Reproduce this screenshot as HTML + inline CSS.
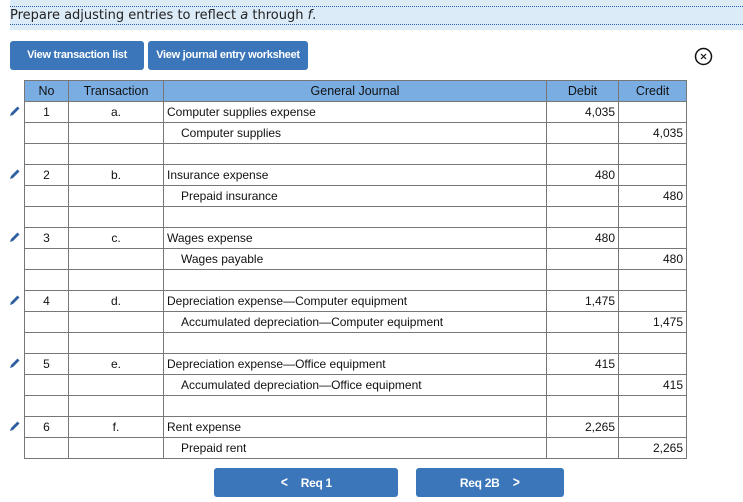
<!DOCTYPE html>
<html><head><meta charset="utf-8"><style>
body{margin:0;width:743px;height:502px;background:#fff;font-family:"Liberation Sans",Arial,sans-serif;position:relative;overflow:hidden}
.hdr{position:absolute;left:10px;top:0;width:733px;height:30px;background:#dcebf8}
.hdr .t{position:absolute;left:0;top:6px;width:733px;height:17px;border-top:1px dotted #2a5fb0;border-bottom:1px dotted #2a5fb0;line-height:17px;color:#222;font-family:"DejaVu Sans",sans-serif;font-size:13px}
.btn{position:absolute;background:#3a76b9;color:#fff;font-weight:bold;font-size:11px;border-radius:3px;text-align:center;letter-spacing:-0.3px}
table{position:absolute;left:24px;top:80px;border-collapse:collapse;font-size:12px;color:#111}
td,th{border:1px solid #777;height:21px;padding:0 3px;box-sizing:border-box}
th{background:#7aaee3;font-weight:normal;font-size:12.5px}
td.c{text-align:center}td.r{text-align:right}
.ind{padding-left:17px}
.pen{position:absolute;left:9px;width:12px;height:12px}
.ch{font-size:15px;display:inline-block;transform:scaleX(0.8)}
</style></head><body>
<div class="hdr"><div class="t">Prepare adjusting entries to reflect <i>a</i> through <i>f</i>.</div></div>
<div class="btn" style="left:10px;top:41px;width:134px;height:29px;line-height:29px">View transaction list</div>
<div class="btn" style="left:148px;top:41px;width:160px;height:29px;line-height:29px">View journal entry worksheet</div>
<svg style="position:absolute;left:694px;top:47px" width="19" height="19" viewBox="0 0 19 19"><circle cx="9.5" cy="9.5" r="8" fill="none" stroke="#111" stroke-width="1.5"/><path d="M7 7L12 12M12 7L7 12" stroke="#111" stroke-width="1.2"/></svg>
<table>
<colgroup><col style="width:44px"><col style="width:95px"><col style="width:383px"><col style="width:72px"><col style="width:68px"></colgroup>
<tr><th>No</th><th>Transaction</th><th>General Journal</th><th>Debit</th><th>Credit</th></tr>
<tr><td class="c">1</td><td class="c">a.</td><td>Computer supplies expense</td><td class="r">4,035</td><td></td></tr>
<tr><td></td><td></td><td class="ind">Computer supplies</td><td></td><td class="r">4,035</td></tr>
<tr><td></td><td></td><td></td><td></td><td></td></tr>
<tr><td class="c">2</td><td class="c">b.</td><td>Insurance expense</td><td class="r">480</td><td></td></tr>
<tr><td></td><td></td><td class="ind">Prepaid insurance</td><td></td><td class="r">480</td></tr>
<tr><td></td><td></td><td></td><td></td><td></td></tr>
<tr><td class="c">3</td><td class="c">c.</td><td>Wages expense</td><td class="r">480</td><td></td></tr>
<tr><td></td><td></td><td class="ind">Wages payable</td><td></td><td class="r">480</td></tr>
<tr><td></td><td></td><td></td><td></td><td></td></tr>
<tr><td class="c">4</td><td class="c">d.</td><td>Depreciation expense—Computer equipment</td><td class="r">1,475</td><td></td></tr>
<tr><td></td><td></td><td class="ind">Accumulated depreciation—Computer equipment</td><td></td><td class="r">1,475</td></tr>
<tr><td></td><td></td><td></td><td></td><td></td></tr>
<tr><td class="c">5</td><td class="c">e.</td><td>Depreciation expense—Office equipment</td><td class="r">415</td><td></td></tr>
<tr><td></td><td></td><td class="ind">Accumulated depreciation—Office equipment</td><td></td><td class="r">415</td></tr>
<tr><td></td><td></td><td></td><td></td><td></td></tr>
<tr><td class="c">6</td><td class="c">f.</td><td>Rent expense</td><td class="r">2,265</td><td></td></tr>
<tr><td></td><td></td><td class="ind">Prepaid rent</td><td></td><td class="r">2,265</td></tr>
</table>
<svg class="pen" style="top:105px" viewBox="0 0 12 12"><path d="M1 11L2 8L8.5 1.5L10.5 3.5L4 10Z" fill="#2f5f9f"/></svg>
<svg class="pen" style="top:168px" viewBox="0 0 12 12"><path d="M1 11L2 8L8.5 1.5L10.5 3.5L4 10Z" fill="#2f5f9f"/></svg>
<svg class="pen" style="top:231px" viewBox="0 0 12 12"><path d="M1 11L2 8L8.5 1.5L10.5 3.5L4 10Z" fill="#2f5f9f"/></svg>
<svg class="pen" style="top:294px" viewBox="0 0 12 12"><path d="M1 11L2 8L8.5 1.5L10.5 3.5L4 10Z" fill="#2f5f9f"/></svg>
<svg class="pen" style="top:357px" viewBox="0 0 12 12"><path d="M1 11L2 8L8.5 1.5L10.5 3.5L4 10Z" fill="#2f5f9f"/></svg>
<svg class="pen" style="top:420px" viewBox="0 0 12 12"><path d="M1 11L2 8L8.5 1.5L10.5 3.5L4 10Z" fill="#2f5f9f"/></svg>
<div class="btn" style="left:214px;top:468px;width:184px;height:29px;line-height:29px;font-size:12px"><span class="ch">&lt;</span>&nbsp;&nbsp;&nbsp;&nbsp;Req 1</div>
<div class="btn" style="left:416px;top:468px;width:148px;height:29px;line-height:29px;font-size:12px">Req 2B&nbsp;&nbsp;&nbsp;&nbsp;<span class="ch">&gt;</span></div>
</body></html>
